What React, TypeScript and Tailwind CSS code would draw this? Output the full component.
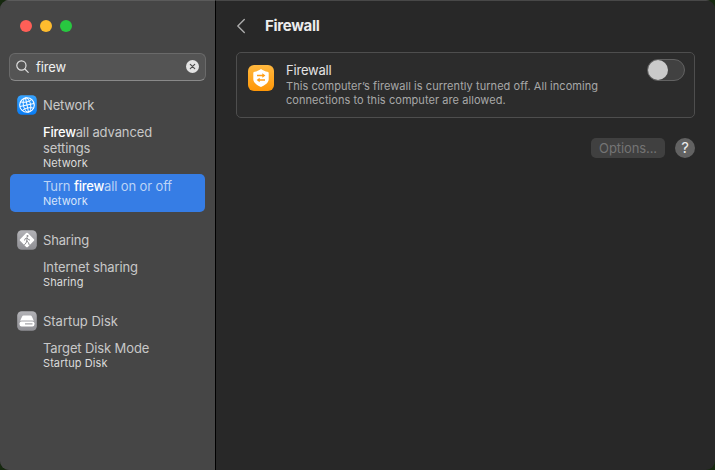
import React from 'react';

type Result = { title: React.ReactNode; section: string; selected?: boolean };

function Glyph({ label }: { label: string }) {
  return (
    <svg width="20" height="20" viewBox="0 0 20 20" className="shrink-0">
      <defs>
        <linearGradient id="blue" x2="0" y2="1">
          <stop stopColor="#38a4ff" />
          <stop offset="1" stopColor="#087cf5" />
        </linearGradient>
        <linearGradient id="gray" x2="0" y2="1">
          <stop stopColor="#b3b3b7" />
          <stop offset="1" stopColor="#8e8e93" />
        </linearGradient>
      </defs>
      <rect x="0.2" y="0.2" width="19.6" height="19.6" rx="4.6" fill={label === 'Network' ? 'url(#blue)' : 'url(#gray)'} />
      {label === 'Network' && (
        <g fill="none" stroke="#fff" strokeWidth="1">
          <circle cx="10" cy="10" r="7.3" strokeWidth="1.1" />
          <g transform="rotate(-12 10 10)" strokeWidth="0.9">
            <ellipse cx="10" cy="10" rx="3.6" ry="7.3" />
            <path d="M10 2.7v14.6M2.7 10h14.6M4.3 5.6c3.2 1.9 8.2 1.9 11.4 0M4.3 14.4c3.2-1.9 8.2-1.9 11.4 0" />
          </g>
        </g>
      )}
      {label === 'Sharing' && (
        <>
          <rect x="4.5" y="4.5" width="11" height="11" rx="1.2" fill="#fff" transform="rotate(45 10 10)" />
          <circle cx="10.5" cy="5.9" r="1" fill="#8c8c90" />
          <path d="M10.1 7.9 9.8 11l1.6 1.5.8 2.3M9.8 11l-.7 1.9-1.5 1.7M7.7 10.1l.5-1.5 1.9-.7 1.2 1.5 1.3.6" fill="none" stroke="#8c8c90" strokeWidth="1" strokeLinecap="round" strokeLinejoin="round" />
        </>
      )}
      {label === 'Startup Disk' && (
        <>
          <path d="M3.2 9.7 5 5.7Q5.5 4.6 6.6 4.6h6.8q1.1 0 1.6 1.1l1.8 4Q16 9.4 15 9.4H5q-1 0-1.8.3Z" fill="#fff" />
          <rect x="2.6" y="10.4" width="14.8" height="5" rx="1.9" fill="#fff" />
          <path d="M8 12.9h7.5" stroke="#a4a4a8" strokeWidth="1.4" />
        </>
      )}
    </svg>
  );
}

function Section({ name, results }: { name: string; results: Result[] }) {
  return (
    <section>
      <div className="mb-[5px] flex h-5 items-center gap-1.5 pl-[7px] text-[13px] text-[#c9c9c9]">
        <Glyph label={name} />
        <h2 className={`pt-px leading-[19px] ${name === 'Startup Disk' ? 'tracking-[-0.02px]' : 'tracking-[-0.16px]'}`}>{name}</h2>
      </div>
      {results.map((r, i) => (
        <div key={i} className={`rounded-[5px] py-1 pr-5 pl-[33px] ${r.selected ? 'bg-[#367de5] text-[#bcd4f6]' : 'text-[#c8c8c8]'}`}>
          <div className="text-[13px] leading-4 tracking-[-0.12px]">{r.title}</div>
          <div className={`text-[11px] leading-[14px] tracking-[0.08px] ${r.selected ? 'text-[#d8e5fa]' : 'text-[#dcdcdc]'}`}>{r.section}</div>
        </div>
      ))}
    </section>
  );
}

function Match({ children }: { children: React.ReactNode }) {
  return <span className="font-medium tracking-[-0.25px] text-white">{children}</span>;
}

export default function App() {
  return (
    <div className="h-[470px] w-[715px] bg-[#16290f] font-['Inter','Liberation_Sans',sans-serif]">
      <div className="flex h-full overflow-hidden rounded-[9px] bg-[#282828]">
        <aside className="w-[216px] shrink-0 border-t border-r border-t-[#5b5b5b] border-r-black bg-[#464646]">
          <div className="flex gap-2 pt-[19px] pl-5">
            <span className="size-3 rounded-full bg-[#ff5f57]" />
            <span className="size-3 rounded-full bg-[#febc2e]" />
            <span className="size-3 rounded-full bg-[#28c840]" />
          </div>
          <div className="mt-[21px] mr-[9px] ml-[9px] flex h-7 items-center rounded-md border border-[#6a6a6a] border-b-[#898989] bg-[#545454] pr-1.5 pl-1.5">
            <svg width="14" height="14" viewBox="0 0 14 14" fill="none" stroke="#dedede" strokeWidth="1.2" strokeLinecap="round">
              <circle cx="5.4" cy="5.5" r="4.6" />
              <path d="m8.9 9 3.3 3.3" />
            </svg>
            <span className="ml-1.5 flex-1 text-[13px] leading-4 tracking-[-0.15px] text-[#f0f0f0]">firew</span>
            <svg width="13" height="13" viewBox="0 0 13 13" className="-mt-px">
              <circle cx="6.5" cy="6.5" r="6.5" fill="#e3e3e3" />
              <path d="m4.3 4.3 4.4 4.4m0-4.4L4.3 8.7" stroke="#505050" strokeWidth="1.2" strokeLinecap="round" />
            </svg>
          </div>
          <nav className="mt-3.5 flex flex-col gap-[18px] px-2.5">
            <Section
              name="Network"
              results={[
                { title: <><Match>Firew</Match>all advanced settings</>, section: 'Network' },
                { title: <>Turn <Match>firew</Match>all on or off</>, section: 'Network', selected: true },
              ]}
            />
            <Section name="Sharing" results={[{ title: 'Internet sharing', section: 'Sharing' }]} />
            <Section name="Startup Disk" results={[{ title: 'Target Disk Mode', section: 'Startup Disk' }]} />
          </nav>
        </aside>
        <main className="flex-1 border-t border-[#484848] pr-5 pl-5">
          <header className="mb-px flex h-[50px] items-center">
            <svg width="10" height="16" viewBox="0 0 10 16" fill="none" stroke="#aaaaaa" strokeWidth="1.4" strokeLinecap="round" strokeLinejoin="round">
              <path d="M8.3 1.5 1.8 8l6.5 6.5" />
            </svg>
            <h1 className="ml-[19px] text-[15px] font-bold tracking-[-0.3px] text-[#ececec]">Firewall</h1>
          </header>
          <div className="flex h-[66px] rounded-[5px] border border-[#4e4e4e] bg-[#2c2c2c] pt-1.5 pr-[9px] pl-[11px]">
            <svg width="26" height="26" viewBox="0 0 26 26" className="mt-1.5 shrink-0">
              <defs>
                <linearGradient id="orange" x2="0" y2="1">
                  <stop stopColor="#ffb83f" />
                  <stop offset="1" stopColor="#ff9707" />
                </linearGradient>
              </defs>
              <rect width="26" height="26" rx="6" fill="url(#orange)" />
              <path d="M13 4c2 1.6 4.4 2.4 6.4 2.7.9.1 1.3.6 1.3 1.4v6.2c0 3.4-3.5 5.8-7.7 7.8-4.2-2-7.7-4.4-7.7-7.8V8.1c0-.8.4-1.3 1.3-1.4C8.6 6.4 11 5.6 13 4Z" fill="#fff" />
              <path d="M9 10.5h6M11 15h6" stroke="#ff9e17" strokeWidth="1.3" />
              <path d="m14.3 8.3 3.1 2.2-3.1 2.2ZM11.7 12.8l-3.1 2.2 3.1 2.2Z" fill="#ff9e17" />
            </svg>
            <div className="ml-3 flex-1 pt-[3px]">
              <h2 className="text-[13px] leading-4 tracking-[-0.2px] text-[#e3e3e3]">Firewall</h2>
              <p className="mt-px w-[330px] text-[11px] leading-[14px] tracking-[0.06px] text-[#a8a8a8]">This computer’s firewall is currently turned off. All incoming<br />connections to this computer are allowed.</p>
            </div>
            <button role="switch" aria-checked="false" aria-label="Firewall" className="flex h-[22px] w-[38px] items-center rounded-full border border-[#626262] bg-[#414141]">
              <span className="size-5 rounded-full bg-[#cacaca]" />
            </button>
          </div>
          <div className="mt-5 flex justify-end gap-2.5">
            <button className="h-5 w-[74px] rounded-[5px] bg-[#404040] text-[13px] leading-5 tracking-[-0.1px] text-[#747474]">Options...</button>
            <button className="size-5 rounded-full bg-[#626262] text-[15px] leading-5 text-[#ececec]">?</button>
          </div>
        </main>
      </div>
    </div>
  );
}
